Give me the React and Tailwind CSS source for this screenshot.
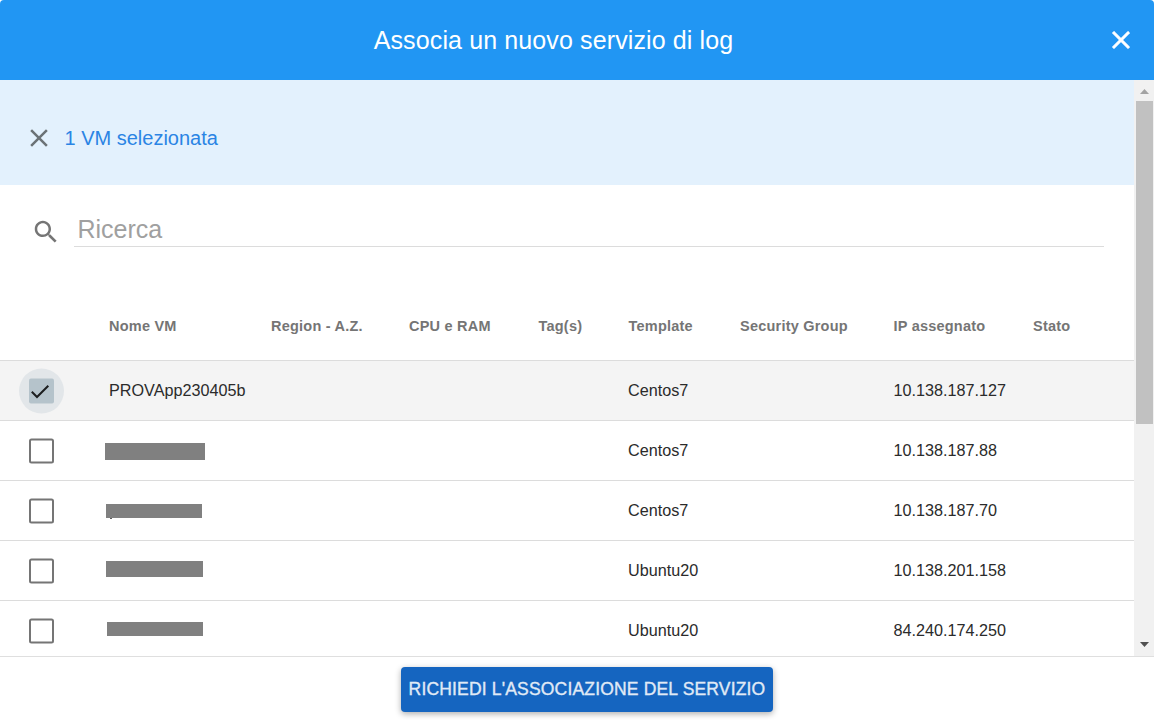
const columns = [
  { label: 'Nome VM', width: 'w-[162px]' },
  { label: 'Region - A.Z.', width: 'w-[138px]' },
  { label: 'CPU e RAM', width: 'w-[129.5px]' },
  { label: 'Tag(s)', width: 'w-[90px]' },
  { label: 'Template', width: 'w-[111.5px]' },
  { label: 'Security Group', width: 'w-[153.5px]' },
  { label: 'IP assegnato', width: 'w-[139.5px]' },
  { label: 'Stato', width: 'w-[60px]' },
];

const rows = [
  { name: 'PROVApp230405b', template: 'Centos7', ip: '10.138.187.127', selected: true },
  { mask: 'h-[17px] w-[100px] -ml-1 mt-[22px]', template: 'Centos7', ip: '10.138.187.88' },
  { mask: 'h-3.5 w-24 -ml-[3px] mt-[23px]', template: 'Centos7', ip: '10.138.187.70', speck: true },
  { mask: 'h-4 w-[97px] -ml-[3px] mt-5', template: 'Ubuntu20', ip: '10.138.201.158' },
  { mask: 'h-3.5 w-24 -ml-0.5 mt-[21px]', template: 'Ubuntu20', ip: '84.240.174.250' },
];

function CloseIcon({ className }) {
  return (
    <svg viewBox="0 0 24 24" className={className} fill="currentColor">
      <path d="M19 6.41L17.59 5 12 10.59 6.41 5 5 6.41 10.59 12 5 17.59 6.41 19 12 13.41 17.59 19 19 17.59 13.41 12z" />
    </svg>
  );
}

function Checkbox({ checked }) {
  return (
    <svg viewBox="0 0 46 46" className="size-[46px]" fill="none">
      {checked ? (
        <>
          <circle cx="22.5" cy="23" r="22.5" fill="#e2e6e9" />
          <rect x="10" y="10.5" width="25" height="25" rx="2" fill="#b5c3cb" />
          <path d="M12.8 23.8 L18 29 L29.3 17.7" stroke="#1c1e1f" strokeWidth="2" />
        </>
      ) : (
        <rect x="11" y="11.5" width="23" height="23" rx="1.5" stroke="#757575" strokeWidth="2" />
      )}
    </svg>
  );
}

function Row({ row }) {
  return (
    <div className={`flex h-[60px] shrink-0 border-t border-[#dcdcdc] text-[16.2px] text-[#2b2b2b] ${row.selected ? 'bg-[#f4f4f4]' : 'bg-white'}`}>
      <div className="w-[109px] shrink-0 pt-[7px] pl-[19px]">
        <Checkbox checked={row.selected} />
      </div>
      <div className="w-[519px] shrink-0">
        {row.name ? (
          <div className="leading-[58px]">{row.name}</div>
        ) : (
          <div className={`relative bg-[#808080] ${row.mask}`}>
            {row.speck && <div className="absolute top-full left-1 h-px w-0.5 bg-[#606060]" />}
          </div>
        )}
      </div>
      <div className="w-[265.5px] shrink-0 leading-[58px]">{row.template}</div>
      <div className="leading-[58px]">{row.ip}</div>
    </div>
  );
}

export default function App() {
  return (
    <div className="flex h-[720px] w-[1154px] flex-col overflow-hidden bg-white font-['Liberation_Sans',Arial,sans-serif]">
      <header className="flex h-20 shrink-0 items-center rounded-t bg-[#2196f3] text-white">
        <h2 className="flex-1 pt-0.5 pl-px text-center text-[25px] tracking-[0.12px]">Associa un nuovo servizio di log</h2>
        <button className="mr-[18px] flex size-[30px] items-center justify-center">
          <CloseIcon className="size-[30px] stroke-current stroke-[0.5]" />
        </button>
      </header>

      <div className="flex h-[576px] shrink-0">
        <main className="flex w-[1134px] flex-col overflow-hidden">
          <div className="flex h-[105px] shrink-0 items-center bg-[#e3f1fd] pt-2.5 pl-6">
            <CloseIcon className="size-[30px] text-[#6b7276]" />
            <span className="pl-[10.5px] text-xl text-[#2a84e4]">1 VM selezionata</span>
          </div>

          <div className="flex h-[107px] shrink-0 items-start pl-[31px]">
            <svg viewBox="0 0 24 24" className="mt-8 size-[30px] text-[#757575]" fill="currentColor">
              <path d="M15.5 14h-.79l-.28-.27C15.41 12.59 16 11.11 16 9.5 16 5.91 13.09 3 9.5 3S3 5.91 3 9.5 5.91 16 9.5 16c1.61 0 3.09-.59 4.23-1.57l.27.28v.79l5 4.99L20.49 19l-4.99-5zm-6 0C7.01 14 5 11.99 5 9.5S7.01 5 9.5 5 14 7.01 14 9.5 11.99 14 9.5 14z" />
            </svg>
            <div className="ml-[13px] h-[62px] w-[1030px] border-b border-[#dcdcdc] pt-[26px] pl-[3.5px] text-[25px] leading-[37px] text-[#a0a0a0]">
              Ricerca
            </div>
          </div>

          <div className="flex h-[68px] shrink-0 pl-[109px] text-[14.5px] leading-[68px] font-bold tracking-[0.22px] text-[#757575]">
            {columns.map((c) => (
              <div key={c.label} className={`shrink-0 whitespace-nowrap ${c.width}`}>{c.label}</div>
            ))}
          </div>

          {rows.map((row) => <Row key={row.ip} row={row} />)}
        </main>

        <div className="flex w-5 flex-col items-center bg-[#f1f1f1]">
          <svg viewBox="0 0 20 21" className="h-[21px] w-5 shrink-0" fill="#a3a3a3">
            <path d="M6 14 L10.5 9 L15 14 Z" />
          </svg>
          <div className="h-[323px] w-[17px] bg-[#c1c1c1]" />
          <svg viewBox="0 0 20 21" className="mt-auto h-[21px] w-5 shrink-0" fill="#505050">
            <path d="M6 7 L15 7 L10.5 12 Z" />
          </svg>
        </div>
      </div>

      <footer className="flex h-16 shrink-0 justify-center border-t border-[#dfdfdf] pt-2.5 pl-5">
        <button className="h-[45px] w-[372px] rounded bg-[#1565c0] text-[17.5px] tracking-[0.175px] whitespace-nowrap text-[#e0eaf6] shadow-[0_2px_6px_rgba(0,0,0,0.32)] [-webkit-text-stroke:0.35px_#e0eaf6]">
          RICHIEDI L'ASSOCIAZIONE DEL SERVIZIO
        </button>
      </footer>
    </div>
  );
}
